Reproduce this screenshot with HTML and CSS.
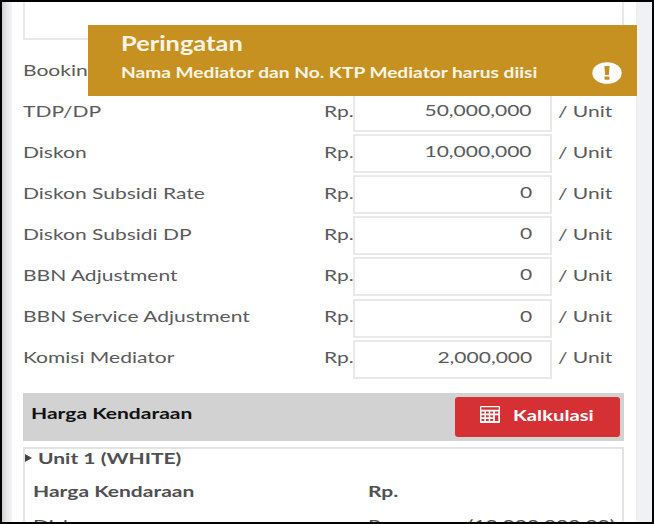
FILE: index.html
```html
<!DOCTYPE html>
<html lang="id">
<head>
    <meta charset="UTF-8">
    <meta name="viewport" content="width=device-width, initial-scale=1.0">
    <title>Harga Kendaraan</title>
    <link rel="stylesheet" href="styles.css">
</head>
<body>
    <div class="page">
        <div class="side-shadow"></div>
        <div class="content">
            <div class="notes"></div>

            <div class="rows">
                <div class="row">
                    <label><span class="wide">Bookin</span></label>
                </div>
                <div class="row">
                    <label><span class="wide">TDP/DP</span></label>
                    <span class="currency"><span class="wide">Rp.</span></span>
                    <div class="amount"><span class="wide">50,000,000</span></div>
                    <span class="unit"><span class="wide">/ Unit</span></span>
                </div>
                <div class="row">
                    <label><span class="wide">Diskon</span></label>
                    <span class="currency"><span class="wide">Rp.</span></span>
                    <div class="amount"><span class="wide">10,000,000</span></div>
                    <span class="unit"><span class="wide">/ Unit</span></span>
                </div>
                <div class="row">
                    <label><span class="wide">Diskon Subsidi Rate</span></label>
                    <span class="currency"><span class="wide">Rp.</span></span>
                    <div class="amount"><span class="wide">0</span></div>
                    <span class="unit"><span class="wide">/ Unit</span></span>
                </div>
                <div class="row">
                    <label><span class="wide">Diskon Subsidi DP</span></label>
                    <span class="currency"><span class="wide">Rp.</span></span>
                    <div class="amount"><span class="wide">0</span></div>
                    <span class="unit"><span class="wide">/ Unit</span></span>
                </div>
                <div class="row">
                    <label><span class="wide">BBN Adjustment</span></label>
                    <span class="currency"><span class="wide">Rp.</span></span>
                    <div class="amount"><span class="wide">0</span></div>
                    <span class="unit"><span class="wide">/ Unit</span></span>
                </div>
                <div class="row">
                    <label><span class="wide">BBN Service Adjustment</span></label>
                    <span class="currency"><span class="wide">Rp.</span></span>
                    <div class="amount"><span class="wide">0</span></div>
                    <span class="unit"><span class="wide">/ Unit</span></span>
                </div>
                <div class="row">
                    <label><span class="wide">Komisi Mediator</span></label>
                    <span class="currency"><span class="wide">Rp.</span></span>
                    <div class="amount"><span class="wide">2,000,000</span></div>
                    <span class="unit"><span class="wide">/ Unit</span></span>
                </div>
            </div>

            <div class="section-title">
                <span class="wide">Harga Kendaraan</span>
                <button type="button" class="btn-calc">
                    <svg width="21" height="17" viewBox="0 0 21 17" preserveAspectRatio="none">
                        <path fill="#fff" fill-rule="evenodd" d="M1 0h19q1 0 1 1v15q0 1-1 1H1q-1 0-1-1V1q0-1 1-1zM1.4 1.3v2.5h18.2V1.3zM1.6 5.6v2h3v-2zM6.2 5.6v2h3v-2zM10.8 5.6v2h3v-2zM15.6 5.6v2h3.6v-2zM1.6 9.2v2h3v-2zM6.2 9.2v2h3v-2zM10.8 9.2v2h3v-2zM1.6 13v2h3v-2zM6.2 13v2h3v-2zM10.8 13v2h3v-2zM15.6 9.2v5.8h3.6V9.2z"/>
                    </svg>
                    <span class="wide">Kalkulasi</span>
                </button>
            </div>

            <div class="unit-card">
                <div class="unit-head"><i class="caret"></i><span class="wide">Unit 1 (WHITE)</span></div>
                <div class="price-row">
                    <span><span class="wide">Harga Kendaraan</span></span>
                    <span><span class="wide">Rp.</span></span>
                </div>
                <div class="price-row light">
                    <span><span class="wide">Diskon</span></span>
                    <span><span class="wide">Rp.</span></span>
                    <span class="value"><span class="wide">(10,000,000.00)</span></span>
                </div>
            </div>
        </div>

        <div class="toast">
            <div class="toast-title"><span class="wide">Peringatan</span></div>
            <div class="toast-text"><span class="wide">Nama Mediator dan No. KTP Mediator harus diisi</span></div>
            <svg class="toast-icon" width="30" height="22" viewBox="0 0 30 22">
                <ellipse cx="15" cy="11" rx="14.7" ry="10.8" fill="#fff"/>
                <path fill="#c69121" d="M12.4 4h5.2l-.7 9h-3.8zM12.6 14.4h4.8v3.4h-4.8z"/>
            </svg>
        </div>
    </div>
</body>
</html>
```

FILE: styles.css
```css
* {
    box-sizing: border-box;
}

body {
    margin: 0;
    font-family: Lato, "Liberation Sans", sans-serif;
    font-size: 16px;
    line-height: 20px;
    color: #5a5a5c;
}

.page {
    position: relative;
    display: flex;
    width: 654px;
    height: 524px;
    border: 2px solid #000;
    background: #fff;
    overflow: hidden;
}

/* the form is shown stretched sideways */
.wide {
    display: inline-block;
    white-space: nowrap;
    transform: scaleX(1.313);
    transform-origin: left center;
}

.side-shadow {
    flex: none;
    width: 10px;
    background: linear-gradient(to right, #cfcfd1, #e6e7e9 50%, #f4f4f5);
}

.content {
    flex: none;
    width: 624px;
    padding: 0 12px 0 11px;
}

.page::after {
    content: "";
    flex: 1;
    background: #f0f1f4;
}

.notes {
    height: 38px;
    border: 2px solid #e9e9e9;
    border-top: 0;
}

.rows {
    padding-top: 12px;
    height: 353px;
}

.row {
    display: grid;
    grid-template-columns: 301px 29px 199px 1fr;
    height: 41.1px;
}

.row label,
.currency,
.unit {
    padding-top: 7.6px;
}

.unit {
    padding-left: 6px;
}

.amount {
    height: 39px;
    padding: 5px 18px 0 0;
    border: 2px solid #e9e9e9;
    text-align: right;
}

.amount .wide,
.value .wide {
    transform-origin: right center;
}

.section-title {
    display: flex;
    justify-content: space-between;
    height: 48px;
    padding: 4px 4px 4px 8px;
    background: #d2d2d2;
    color: #111;
    font-weight: bold;
}

.section-title > .wide {
    margin-top: 6px;
}

.btn-calc {
    display: flex;
    align-items: flex-start;
    width: 165px;
    height: 40px;
    padding: 9px 0 0 25px;
    border: 0;
    border-radius: 3px;
    background: #d53135;
    color: #fff;
    font: bold 16px/18px Lato, sans-serif;
}

.btn-calc svg {
    width: 20px;
    margin-right: 13px;
}

.btn-calc .wide {
    transform: scaleX(1.265);
}

.unit-card {
    height: 100px;
    margin-top: 6px;
    border: 2px solid #e4e4e4;
    color: #505052;
    font-weight: bold;
}

.unit-head {
    display: flex;
    align-items: center;
    height: 17px;
}

.caret {
    width: 0;
    margin-right: 6px;
    border: 4.5px solid transparent;
    border-left: 7px solid #444;
    border-right: 0;
}

.price-row {
    display: grid;
    grid-template-columns: 335px 60px 1fr;
    height: 34px;
    padding: 15px 7px 0 8px;
}

.light {
    font-weight: normal;
}

.value {
    text-align: right;
}

.toast {
    position: absolute;
    top: 23px;
    left: 86px;
    width: 549px;
    height: 71px;
    padding: 7px 0 0 33px;
    background: #c69121;
    color: #fcf5e6;
    font-weight: bold;
}

.toast-title {
    font-size: 20px;
    line-height: 22px;
}

.toast-title .wide {
    transform: scaleX(1.27);
}

.toast-text {
    margin-top: 8px;
    font-size: 15px;
}

.toast-text .wide {
    transform: scaleX(1.275);
}

.toast-icon {
    position: absolute;
    top: 37px;
    right: 15px;
}
```
